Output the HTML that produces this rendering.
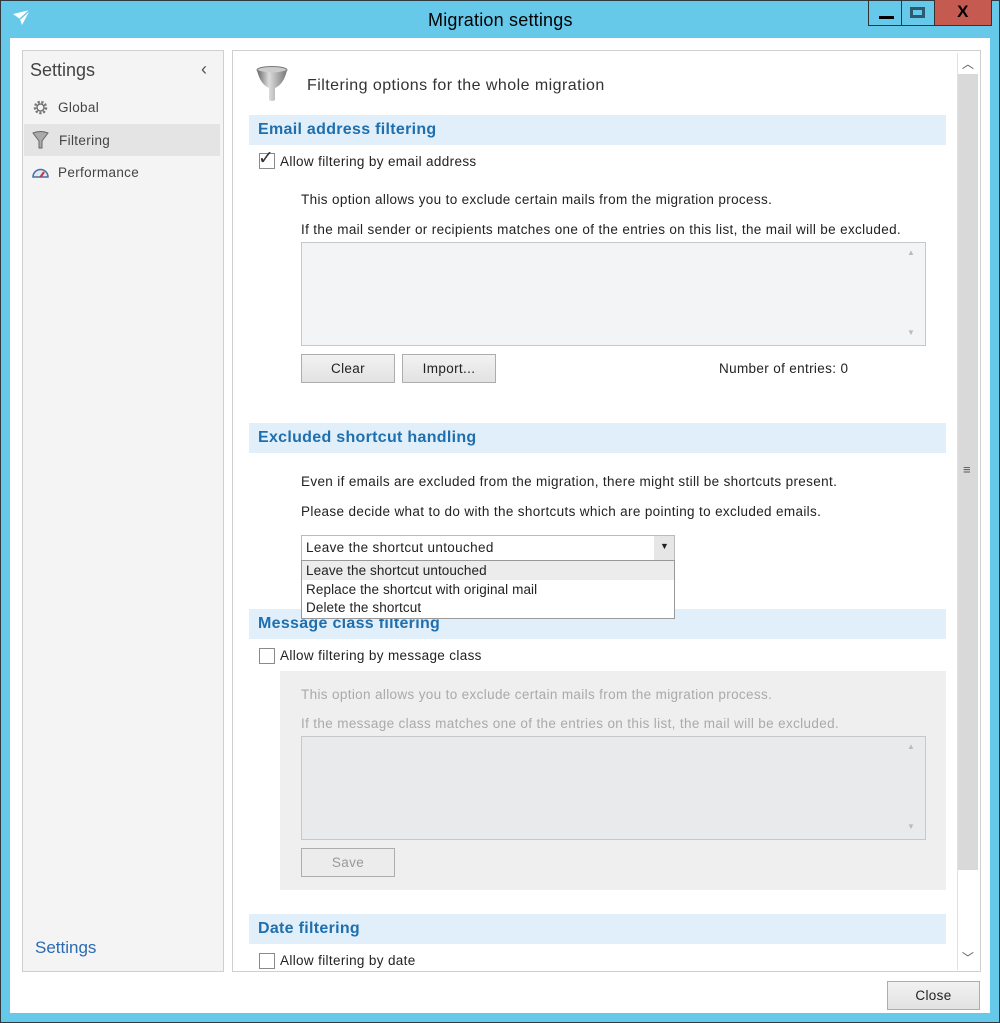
<!DOCTYPE html>
<html><head><meta charset="utf-8"><style>
*{margin:0;padding:0;box-sizing:border-box}
body{width:1000px;height:1023px;position:relative;background:#66c9ea;font-family:"Liberation Sans",sans-serif;font-size:13.5px;letter-spacing:0.35px;color:#222;overflow:hidden}
.a{position:absolute}
.frame{left:0;top:0;width:1000px;height:1023px;border:1px solid #2e3a40}
.client{left:10px;top:38px;width:980px;height:975px;background:#fff}
.t{position:absolute;white-space:nowrap}
.hdr{position:absolute;left:249px;width:697px;height:30px;background:#e0eff9;color:#1f6fae;font-weight:bold;font-size:16px;letter-spacing:0.3px;padding:6px 0 0 9px}
.cb{position:absolute;width:16px;height:16px;border:1px solid #8a8a8a;background:#fff}
.btn{position:absolute;height:29px;border:1px solid #adadad;background:linear-gradient(#f2f2f2,#e2e2e2);text-align:center;line-height:27px;font-size:13.5px}
.list{position:absolute;border:1px solid #c8c8c8;background:#f3f4f6}
</style></head><body>
<div class="a frame"></div>
<svg class="a" style="left:12px;top:9px" width="20" height="18" viewBox="0 0 20 18"><path d="M1 5 L18 1 L10 16 L8 10 Z" fill="#fff"/><path d="M8 10 L18 1" stroke="#66c9ea" stroke-width="1.5"/></svg>
<div class="t" style="left:428px;top:10px;font-size:18px;letter-spacing:0.2px;color:#000">Migration settings</div>
<div class="a" style="left:868px;top:0;width:34px;height:26px;border:1px solid #333;border-top:none"></div>
<div class="a" style="left:879px;top:16px;width:15px;height:3px;background:#000"></div>
<div class="a" style="left:901px;top:0;width:34px;height:26px;border:1px solid #333;border-top:none"></div>
<div class="a" style="left:910px;top:7px;width:15px;height:11px;border:3px solid #2e5a70"></div>
<div class="a" style="left:934px;top:0;width:58px;height:26px;background:#c45a50;border:1px solid #333;border-top:none;text-align:center;font-weight:bold;font-size:17px;line-height:24px;color:#000">X</div>
<div class="a client"></div>
<div class="a" style="left:22px;top:50px;width:202px;height:922px;background:#f4f4f4;border:1px solid #cfcfcf"></div>
<div class="t" style="left:30px;top:60px;font-size:18px;letter-spacing:0;color:#444">Settings</div>
<div class="t" style="left:201px;top:59px;font-size:18px;color:#555">‹</div>
<svg class="a" style="left:32px;top:99px" width="17" height="17" viewBox="0 0 17 17"><circle cx="8.5" cy="8.5" r="5.5" fill="none" stroke="#777" stroke-width="2.5" stroke-dasharray="2.2 1.6"/><circle cx="8.5" cy="8.5" r="3.5" fill="none" stroke="#666" stroke-width="1.3"/></svg>
<div class="t" style="left:58px;top:100px;color:#444">Global</div>
<div class="a" style="left:24px;top:124px;width:196px;height:32px;background:#e4e4e4"></div>
<svg class="a" style="left:32px;top:131px" width="17" height="19" viewBox="0 0 17 19"><path d="M1 2 Q8.5 -1 16 2 L10 10 L10 17 L7 17 L7 10 Z" fill="#aaa" stroke="#666"/></svg>
<div class="t" style="left:59px;top:133px;color:#444">Filtering</div>
<svg class="a" style="left:31px;top:165px" width="19" height="14" viewBox="0 0 19 14"><path d="M2 12 A7.5 7.5 0 0 1 17 12 Z" fill="#dfe8f4" stroke="#4a6fa0" stroke-width="1.5"/><path d="M9.5 12 L13 7" stroke="#c33" stroke-width="2"/></svg>
<div class="t" style="left:58px;top:165px;color:#444">Performance</div>
<div class="t" style="left:35px;top:938px;font-size:17px;letter-spacing:0;color:#2a6bb0">Settings</div>
<div class="a" style="left:232px;top:50px;width:749px;height:922px;border:1px solid #cfcfcf;background:#fff"></div>
<div class="a" style="left:957px;top:53px;width:22px;height:917px;background:#fff;border-left:1px solid #e0e0e0"></div>
<div class="a" style="left:958px;top:53px;width:20px;height:20px;text-align:center;font-size:12px;color:#555;line-height:22px">︿</div>
<div class="a" style="left:958px;top:74px;width:20px;height:796px;background:#d9d9d9"></div>
<div class="t" style="left:963px;top:462px;font-size:13px;color:#555">≡</div>
<div class="a" style="left:958px;top:948px;width:20px;height:20px;text-align:center;font-size:12px;color:#555;line-height:20px">﹀</div>
<svg class="a" style="left:256px;top:66px" width="34" height="38" viewBox="0 0 34 38"><defs><linearGradient id="g" x1="0" x2="1"><stop offset="0" stop-color="#666"/><stop offset=".4" stop-color="#ddd"/><stop offset="1" stop-color="#777"/></linearGradient></defs><ellipse cx="16" cy="4" rx="15" ry="3.5" fill="#ccc" stroke="#777"/><path d="M1 4 Q4 18 13 22 L13 34 Q16 36 19 34 L19 22 Q28 18 31 4 Q16 9 1 4Z" fill="url(#g)"/></svg>
<div class="t" style="left:307px;top:77px;font-size:16px;letter-spacing:0.45px;color:#333">Filtering options for the whole migration</div>

<div class="hdr" style="top:115px">Email address filtering</div>
<div class="cb" style="left:259px;top:153px"></div>
<div class="t" style="left:258px;top:147px;font-size:19px;color:#333">✓</div>
<div class="t" style="left:280px;top:154px">Allow filtering by email address</div>
<div class="t" style="left:301px;top:192px">This option allows you to exclude certain mails from the migration process.</div>
<div class="t" style="left:301px;top:222px">If the mail sender or recipients matches one of the entries on this list, the mail will be excluded.</div>
<div class="list" style="left:301px;top:242px;width:625px;height:104px"></div>
<div class="t" style="left:907px;top:248px;font-size:8px;color:#bbb">▲</div>
<div class="t" style="left:907px;top:328px;font-size:8px;color:#bbb">▼</div>
<div class="btn" style="left:301px;top:354px;width:94px">Clear</div>
<div class="btn" style="left:402px;top:354px;width:94px">Import...</div>
<div class="t" style="left:719px;top:361px">Number of entries: 0</div>

<div class="hdr" style="top:423px">Excluded shortcut handling</div>
<div class="t" style="left:301px;top:474px">Even if emails are excluded from the migration, there might still be shortcuts present.</div>
<div class="t" style="left:301px;top:504px">Please decide what to do with the shortcuts which are pointing to excluded emails.</div>
<div class="a" style="left:301px;top:535px;width:374px;height:26px;border:1px solid #bbb;background:#fff"></div>
<div class="a" style="left:654px;top:536px;width:20px;height:24px;background:#e6e6e6"></div>
<div class="t" style="left:660px;top:541px;font-size:9px">▼</div>
<div class="t" style="left:306px;top:540px">Leave the shortcut untouched</div>

<div class="hdr" style="top:609px">Message class filtering</div>
<div class="a" style="left:301px;top:560px;width:374px;height:59px;border:1px solid #999;background:#fff"></div>
<div class="a" style="left:302px;top:561px;width:372px;height:19px;background:#ececec"></div>
<div class="t" style="left:306px;top:563px;letter-spacing:0.1px">Leave the shortcut untouched</div>
<div class="t" style="left:306px;top:582px;letter-spacing:0.1px">Replace the shortcut with original mail</div>
<div class="t" style="left:306px;top:600px;letter-spacing:0.1px">Delete the shortcut</div>
<div class="cb" style="left:259px;top:648px"></div>
<div class="t" style="left:280px;top:648px">Allow filtering by message class</div>
<div class="a" style="left:280px;top:671px;width:666px;height:219px;background:#efefef"></div>
<div class="t" style="left:301px;top:687px;color:#aaa">This option allows you to exclude certain mails from the migration process.</div>
<div class="t" style="left:301px;top:716px;color:#aaa">If the message class matches one of the entries on this list, the mail will be excluded.</div>
<div class="list" style="left:301px;top:736px;width:625px;height:104px;background:#e9eaec"></div>
<div class="t" style="left:907px;top:742px;font-size:8px;color:#bbb">▲</div>
<div class="t" style="left:907px;top:822px;font-size:8px;color:#bbb">▼</div>
<div class="btn" style="left:301px;top:848px;width:94px;color:#999;background:#ececec">Save</div>

<div class="hdr" style="top:914px">Date filtering</div>
<div class="cb" style="left:259px;top:953px"></div>
<div class="t" style="left:280px;top:953px">Allow filtering by date</div>

<div class="btn" style="left:887px;top:981px;width:93px">Close</div>
</body></html>
